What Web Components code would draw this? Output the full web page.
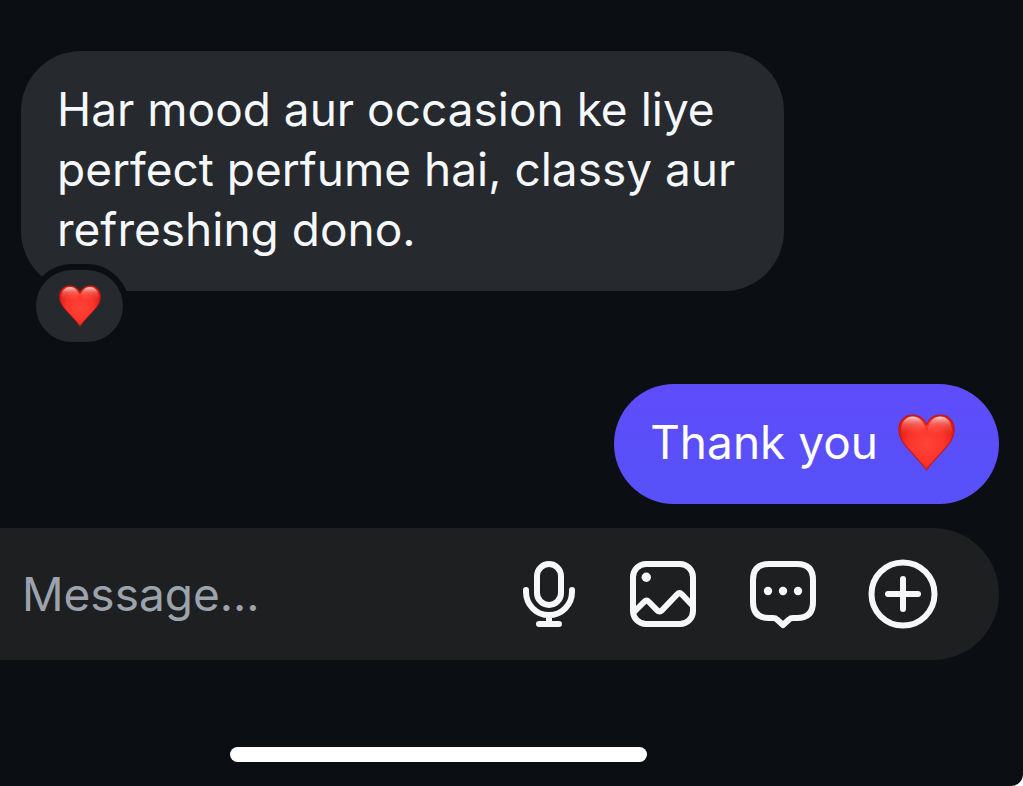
<!DOCTYPE html>
<html lang="hi-Latn">
<head>
<meta charset="utf-8">
<meta name="viewport" content="width=device-width, initial-scale=1">
<title>Chat</title>
<style>
html {
    background: #fff;
}
body {
    margin: 0;
    font-family: Inter, "Liberation Sans", sans-serif;
    font-size: 46px;
    line-height: 60px;
    color: #f5f8fa;
}
</style>
</head>
<body>

<chat-screen>
    <chat-message>Har mood aur occasion ke liye perfect perfume hai, classy aur refreshing dono.
        <heart-emoji slot="reaction" size="42"></heart-emoji>
    </chat-message>
    <chat-message mine>Thank you <heart-emoji size="57"></heart-emoji></chat-message>
    <message-bar slot="footer" placeholder="Message..."></message-bar>
    <home-indicator slot="footer"></home-indicator>
</chat-screen>

<script>
// heart-emoji
var template_heart = document.createElement("template");
template_heart.innerHTML = `
<style>
:host {
    display: inline-block;
    line-height: 0;
}
svg {
    display: block;
}
</style>
<svg viewBox="0 0 56 56" role="img" aria-label="red heart">
    <defs>
        <radialGradient id="body" cx="28" cy="30" r="30" gradientUnits="userSpaceOnUse">
            <stop offset="0" stop-color="#ff4438"/>
            <stop offset="0.6" stop-color="#fc342a"/>
            <stop offset="1" stop-color="#dc1a13"/>
        </radialGradient>
        <linearGradient id="shine" x1="0" y1="0" x2="0" y2="1">
            <stop offset="0" stop-color="#ffe4df" stop-opacity="0.95"/>
            <stop offset="0.4" stop-color="#ff8f85" stop-opacity="0.5"/>
            <stop offset="1" stop-color="#ff4a3c" stop-opacity="0"/>
        </linearGradient>
    </defs>
    <path fill="url(#body)" stroke="#c9150f" d="M28 55C25 50 19 44 13 37.500C6 30 .8 24 .8 15.500C.8 7 6.500 1 14 1C20.500 1 25.500 4.500 28 10.500C30.500 4.500 35.500 1 42 1C49.500 1 55.200 7 55.200 15.500C55.200 24 50 30 43 37.500C37 44 31 50 28 55Z"/>
    <path fill="url(#shine)" d="M3 15C3.500 7 8.500 2.500 14.500 2.500C20 2.500 24.500 6 26.500 13C26 22 20 21 14.500 21C9 21 3 23 3 15Z"/>
    <path fill="url(#shine)" d="M53 15C52.500 7 47.500 2.500 41.500 2.500C36 2.500 31.500 6 29.500 13C30 22 36 21 41.500 21C47 21 53 23 53 15Z"/>
</svg>
`;
class HeartEmoji extends HTMLElement {
    constructor(){
        super();
        this.attachShadow({mode:"open"});
    }
    connectedCallback(){
        this.shadowRoot.appendChild(template_heart.content.cloneNode(true));
        const svg = this.shadowRoot.querySelector("svg");
        const size = this.getAttribute("size") || "42";
        svg.setAttribute("width", size);
        svg.setAttribute("height", size);
    }
}
customElements.define("heart-emoji", HeartEmoji);

// chat-message
var template_message = document.createElement("template");
template_message.innerHTML = `
<style>
:host {
    display: flex;
    flex-direction: column;
    align-items: flex-start;
}
:host([mine]) {
    align-items: flex-end;
}
.bubble {
    box-sizing: border-box;
    max-width: 78%;
    padding: 28px 36px 32px;
    border-radius: 60px;
    background: #26292d;
}
:host([mine]) .bubble {
    display: flex;
    align-items: center;
    gap: 20px;
    padding-right: 44px;
    background: linear-gradient(#5e4cfa, #5751f9);
    color: #fff;
}
.reaction {
    display: flex;
    align-items: center;
    justify-content: center;
    width: 87px;
    height: 72px;
    margin: -27px 0 0 9px;
    border: 6px solid #0b0e12;
    border-radius: 42px;
    background: #26292d;
}
.reaction[hidden] {
    display: none;
}
</style>
<div class="bubble"><slot></slot></div>
<div class="reaction"><slot name="reaction"></slot></div>
`;
class ChatMessage extends HTMLElement {
    constructor(){
        super();
        this.attachShadow({mode:"open"});
    }
    connectedCallback(){
        this.shadowRoot.appendChild(template_message.content.cloneNode(true));
        // no pill when nobody reacted
        this.shadowRoot.querySelector(".reaction").hidden = !this.querySelector("[slot=reaction]");
    }
}
customElements.define("chat-message", ChatMessage);

// message-bar
var template_bar = document.createElement("template");
template_bar.innerHTML = `
<style>
:host {
    display: flex;
    align-items: center;
    gap: 48px;
    box-sizing: border-box;
    height: 132px;
    margin-right: 24px;
    padding: 0 60px 0 22px;
    border-radius: 0 66px 66px 0;
    background: #1e1f21;
}
input {
    flex: 1;
    min-width: 0;
    height: 60px;
    padding: 0;
    border: 0;
    outline: 0;
    background: none;
    font: inherit;
    color: #f5f8fa;
}
input::placeholder {
    color: #9ba3ad;
    opacity: 1;
}
button {
    padding: 0;
    border: 0;
    background: none;
    color: #f6f7f9;
    cursor: pointer;
}
svg {
    display: block;
    fill: none;
    stroke: currentColor;
    stroke-width: 6;
    stroke-linecap: round;
    stroke-linejoin: round;
}
.dot {
    fill: currentColor;
    stroke: none;
}
</style>
<input type="text" aria-label="Message">
<button type="button" aria-label="Voice message">
    <svg width="60" height="72" viewBox="0 0 60 72">
        <rect x="18" y="6" width="24" height="41" rx="12"/>
        <path d="M7 32v2a23 23 0 0 0 46 0v-2M30 58v8M20 66h20"/>
    </svg>
</button>
<button type="button" aria-label="Photo">
    <svg width="72" height="72" viewBox="0 0 72 72">
        <rect x="6" y="6" width="60" height="60" rx="13"/>
        <circle class="dot" cx="19.300" cy="19.300" r="4.700"/>
        <path d="M7 54L17 44Q19.500 41.500 22 44L30 52.200Q32.500 54.500 35 52.200L50 36.500Q52.500 34 55 36.500L65 47"/>
    </svg>
</button>
<button type="button" aria-label="Stickers">
    <svg width="72" height="72" viewBox="0 0 72 72">
        <path d="M22 6H50Q66 6 66 22V44Q66 60 50 60H46Q43.500 60 42 61.500L36 67L30 61.500Q28.500 60 26 60H22Q6 60 6 44V22Q6 6 22 6Z"/>
        <circle class="dot" cx="21" cy="33" r="4.200"/>
        <circle class="dot" cx="36" cy="33" r="4.200"/>
        <circle class="dot" cx="51" cy="33" r="4.200"/>
    </svg>
</button>
<button type="button" aria-label="More">
    <svg width="72" height="72" viewBox="0 0 72 72">
        <circle cx="36" cy="36" r="31.500"/>
        <path d="M21 36h30M36 21v30"/>
    </svg>
</button>
`;
class MessageBar extends HTMLElement {
    constructor(){
        super();
        this.attachShadow({mode:"open"});
    }
    connectedCallback(){
        this.shadowRoot.appendChild(template_bar.content.cloneNode(true));
        this.shadowRoot.querySelector("input").placeholder = this.getAttribute("placeholder") || "";
    }
}
customElements.define("message-bar", MessageBar);

// home-indicator
var template_home = document.createElement("template");
template_home.innerHTML = `
<style>
:host {
    display: flex;
    justify-content: center;
    padding: 87px 146px 24px 0;
}
div {
    width: 417px;
    height: 15px;
    border-radius: 8px;
    background: #fff;
}
</style>
<div></div>
`;
class HomeIndicator extends HTMLElement {
    constructor(){
        super();
        this.attachShadow({mode:"open"});
        this.shadowRoot.appendChild(template_home.content.cloneNode(true));
    }
}
customElements.define("home-indicator", HomeIndicator);

// chat-screen
var template_screen = document.createElement("template");
template_screen.innerHTML = `
<style>
:host {
    display: flex;
    flex-direction: column;
    box-sizing: border-box;
    min-height: 100vh;
    border-radius: 0 0 12px 0;
    background: #0b0e12;
}
main {
    display: flex;
    flex-direction: column;
    gap: 36px;
    padding: 51px 24px 24px 21px;
}
</style>
<main><slot></slot></main>
<footer><slot name="footer"></slot></footer>
`;
class ChatScreen extends HTMLElement {
    constructor(){
        super();
        this.attachShadow({mode:"open"});
        this.shadowRoot.appendChild(template_screen.content.cloneNode(true));
    }
}
customElements.define("chat-screen", ChatScreen);
</script>
</body>
</html>
